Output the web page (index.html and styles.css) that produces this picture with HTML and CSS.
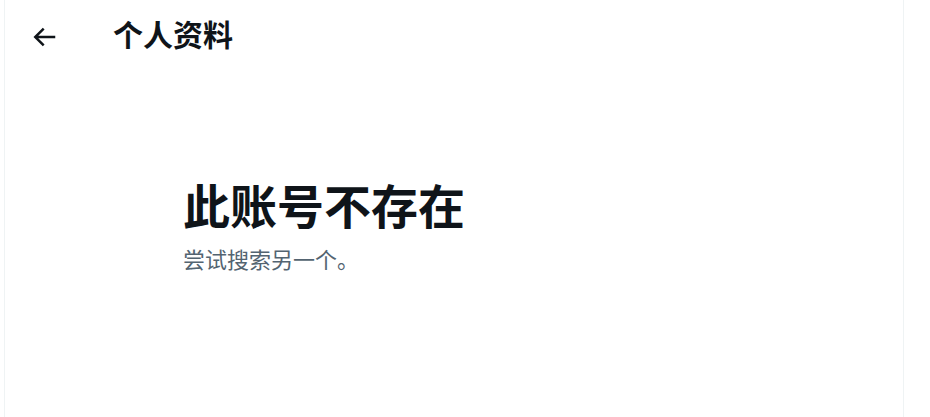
FILE: index.html
```html
<!DOCTYPE html>
<html lang="zh-CN">
<head>
<meta charset="utf-8">
<title>个人资料</title>
<link rel="stylesheet" href="styles.css">
</head>
<body>
<div class="column">
  <header class="header">
    <div class="back">
      <svg viewBox="0 0 24 24" aria-hidden="true"><path d="M7.414 13l5.043 5.04-1.414 1.42L3.586 12l7.457-7.46 1.414 1.42L7.414 11H21v2H7.414z"/></svg>
    </div>
    <h2 class="title">个人资料</h2>
  </header>
  <section class="empty">
    <h1 class="empty-title">此账号不存在</h1>
    <p class="empty-sub">尝试搜索另一个。</p>
  </section>
</div>
</body>
</html>
```
FILE: styles.css
```css
html, body {
  margin: 0;
  padding: 0;
  background: #ffffff;
}
body {
  font-family: "Noto Sans CJK SC", "Noto Sans", sans-serif;
  color: #0f1419;
  height: 417px;
  overflow: hidden;
}
.column {
  margin-left: 4px;
  width: 898px;
  height: 417px;
  border-left: 1px solid #eff3f4;
  border-right: 1px solid #eff3f4;
}
.header {
  display: flex;
  align-items: center;
  height: 73px;
  padding-left: 24px;
}
.back {
  width: 30px;
  height: 30px;
  display: flex;
}
.back svg {
  width: 30px;
  height: 30px;
  fill: #0f1419;
}
.title {
  margin: 0 0 0 54px;
  padding-bottom: 7px;
  font-size: 30px;
  font-weight: 700;
  line-height: 36px;
}
.empty {
  padding: 103px 0 0 178px;
}
.empty-title {
  margin: 0;
  font-size: 47px;
  font-weight: 700;
  line-height: 56px;
}
.empty-sub {
  margin: 11px 0 0;
  font-size: 22px;
  line-height: 30px;
  color: #536471;
}
```
